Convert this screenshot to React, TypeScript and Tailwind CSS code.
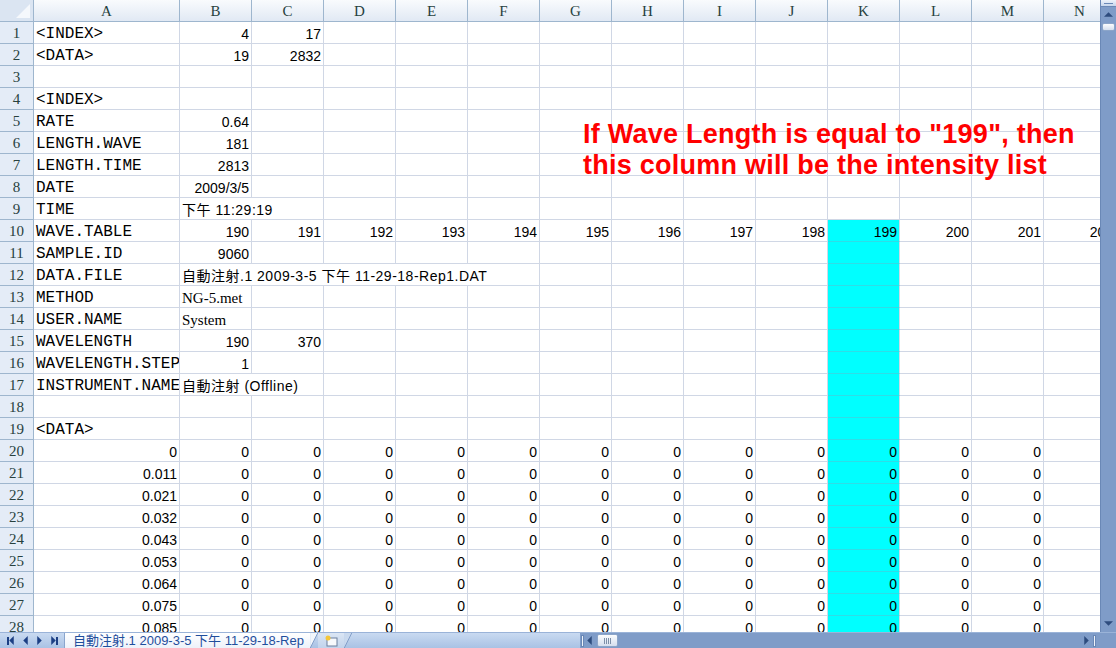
import React from "react";

type Cell = { t?: string; r?: boolean; span?: number; f?: "m" | "n" | "s" | "c" };

const lab = (t: string): Cell => ({ t, f: "m" });
const num = (t: string | number): Cell => ({ t: String(t), r: true, f: "n" });

const letters = ["A", "B", "C", "D", "E", "F", "G", "H", "I", "J", "K", "L", "M", "N"];
const times = ["0", "0.011", "0.021", "0.032", "0.043", "0.053", "0.064", "0.075", "0.085"];

const rows: Cell[][] = [
  [lab("<INDEX>"), num(4), num(17)],
  [lab("<DATA>"), num(19), num(2832)],
  [],
  [lab("<INDEX>")],
  [lab("RATE"), num("0.64")],
  [lab("LENGTH.WAVE"), num(181)],
  [lab("LENGTH.TIME"), num(2813)],
  [lab("DATE"), num("2009/3/5")],
  [lab("TIME"), { t: "下午 11:29:19", span: 2, f: "c" }],
  [lab("WAVE.TABLE"), ...Array.from({ length: 13 }, (_, i) => num(190 + i))],
  [lab("SAMPLE.ID"), num(9060)],
  [lab("DATA.FILE"), { t: "自動注射.1 2009-3-5 下午 11-29-18-Rep1.DAT", span: 5, f: "c" }],
  [lab("METHOD"), { t: "NG-5.met", f: "s" }],
  [lab("USER.NAME"), { t: "System", f: "s" }],
  [lab("WAVELENGTH"), num(190), num(370)],
  [lab("WAVELENGTH.STEP"), num(1)],
  [lab("INSTRUMENT.NAME"), { t: "自動注射 (Offline)", span: 2, f: "c" }],
  [],
  [lab("<DATA>")],
  ...times.map((t) => [num(t), ...Array.from({ length: 13 }, () => num(0))]),
];

const spanClass: Record<number, string> = { 1: "", 2: "col-span-2", 5: "col-span-5" };
const fontClass = {
  m: "font-['Liberation_Mono',monospace] text-[16px] leading-[16px]",
  n: "font-['Liberation_Sans',sans-serif] text-[14px] leading-[16px]",
  c: "font-['Liberation_Sans','Noto_Sans_CJK_TC',sans-serif] text-[14px] leading-[16px] tracking-[0.5px]",
  s: "font-['Liberation_Serif',serif] text-[15px] leading-[16px]",
};

function fill(row: Cell[]) {
  const out: { cell: Cell; col: number }[] = [];
  let col = 0;
  for (const c of row) {
    out.push({ cell: c, col });
    col += c.span ?? 1;
  }
  while (col < 14) {
    out.push({ cell: {}, col });
    col++;
  }
  return out;
}

function Tri({ dir, className }: { dir: "up" | "down" | "left" | "right"; className?: string }) {
  const pts = {
    up: "0,5 5,0 10,5",
    down: "0,0 10,0 5,5",
    left: "5,0 5,10 0,5",
    right: "0,0 5,5 0,10",
  }[dir];
  const vb = dir === "up" || dir === "down" ? "0 0 10 5" : "0 0 5 10";
  const size = dir === "up" || dir === "down" ? "w-[9px] h-[5px]" : "w-[5px] h-[9px]";
  return (
    <svg viewBox={vb} className={`${size} ${className ?? ""}`}>
      <polygon points={pts} fill="currentColor" />
    </svg>
  );
}

export default function App() {
  return (
    <div className="w-[1116px] h-[648px] overflow-hidden bg-white flex flex-col">
      <div className="flex h-[632px]">
        <div className="relative w-[1100px] h-[632px] overflow-hidden">
          <div className="grid grid-cols-[34px_146px_repeat(13,72px)] auto-rows-[22px] w-[1116px]">
            {/* column headers */}
            <div className="relative border-r border-b border-[#9eb6ce] bg-[#dbe5f2]">
              <svg viewBox="0 0 10 10" className="absolute right-[3px] bottom-[3px] w-[14px] h-[14px]">
                <polygon points="10,0 10,10 0,10" fill="#f5f8fc" />
              </svg>
            </div>
            {letters.map((l) => (
              <div
                key={l}
                className="flex items-center justify-center border-r border-b border-[#9eb6ce] bg-gradient-to-b from-[#f9fbfd] to-[#e1e9f4] font-['Liberation_Serif',serif] text-[15px] leading-[16px] text-[#27413e]"
              >
                {l}
              </div>
            ))}
            {rows.map((row, ri) => (
              <React.Fragment key={ri}>
                <div className="flex items-center justify-center border-r border-b border-[#9eb6ce] bg-[#e4ecf7] font-['Liberation_Serif',serif] text-[15px] leading-[16px] text-[#27413e]">
                  {ri + 1}
                </div>
                {fill(row).map(({ cell, col }) => {
                  const cyan = col === 10 && ri >= 9;
                  return (
                    <div
                      key={col}
                      className={`flex items-end pb-[1px] px-[2px] whitespace-nowrap overflow-hidden text-black border-r border-b ${
                        cyan ? "bg-[#00ffff] border-b-[#2fdde6] border-r-[#d0d7e5]" : "border-[#d0d7e5]"
                      } ${cell.r ? "justify-end" : "justify-start"} ${spanClass[cell.span ?? 1]} ${
                        cell.f ? fontClass[cell.f] : ""
                      }`}
                    >
                      {cell.t}
                    </div>
                  );
                })}
              </React.Fragment>
            ))}
          </div>
          <div className="absolute left-[583px] top-[119px] font-['Liberation_Sans',sans-serif] font-bold text-[27px] leading-[31px] tracking-[0.25px] text-[#ff0000] whitespace-nowrap">
            <div>If Wave Length is equal to "199", then</div>
            <div>this column will be the intensity list</div>
          </div>
        </div>
        {/* vertical scrollbar */}
        <div className="w-[16px] h-[632px] flex flex-col items-center bg-[#7f9cc8] border-l border-[#6a88b6]">
          <div className="w-full h-[7px] bg-gradient-to-b from-[#eef3fa] to-[#c7d6ec] border-b border-[#6a88b6] flex items-center justify-center">
            <div className="w-[9px] h-[1px] bg-[#6a88b6]" />
          </div>
          <Tri dir="up" className="mt-[5px] text-[#2e4c7e]" />
          <div className="mt-[6px] w-[13px] h-[8px] rounded-[2px] bg-gradient-to-b from-[#fbfcfe] to-[#d5dfee] border border-[#8ca5c9]" />
          <div className="flex-1" />
          <Tri dir="down" className="mb-[6px] text-[#2e4c7e]" />
        </div>
      </div>
      {/* bottom bar */}
      <div className="h-[16px] flex bg-gradient-to-b from-[#c9daf1] to-[#a9c2e4] border-t border-[#9ab3d8]">
        <div className="w-[64px] flex items-center justify-around px-[2px] text-[#1c3f84]">
          <div className="flex items-center">
            <div className="w-[2px] h-[8px] bg-current" />
            <Tri dir="left" className="w-[4px] h-[8px]" />
          </div>
          <Tri dir="left" className="w-[4px] h-[8px]" />
          <Tri dir="right" className="w-[4px] h-[8px]" />
          <div className="flex items-center">
            <Tri dir="right" className="w-[4px] h-[8px]" />
            <div className="w-[2px] h-[8px] bg-current" />
          </div>
        </div>
        <div className="flex items-stretch">
          <div className="bg-gradient-to-b from-[#ffffff] to-[#edf2fa] border-l border-[#8aa5cd] flex items-center pl-[8px] pr-[6px] font-['Liberation_Sans','Noto_Sans_CJK_TC',sans-serif] text-[13px] leading-none text-[#1f4e9c] whitespace-nowrap">
            自動注射.1 2009-3-5 下午 11-29-18-Rep
          </div>
          <svg viewBox="0 0 8 16" className="w-[8px] h-[15px]">
            <polygon points="0,0 0,16 8,0" fill="#f2f6fb" />
            <line x1="0" y1="16" x2="8" y2="0" stroke="#7f9bc6" strokeWidth="1" />
          </svg>
          <div className="w-[26px] flex items-center justify-center bg-gradient-to-b from-[#dbe6f4] to-[#c1d3ec]">
            <svg viewBox="0 0 14 12" className="w-[14px] h-[12px]">
              <rect x="3" y="3" width="10" height="8" fill="#f7f9fc" stroke="#6a7f9e" />
              <circle cx="4" cy="3" r="2.5" fill="#f4c63a" />
            </svg>
          </div>
          <svg viewBox="0 0 8 16" className="w-[8px] h-[15px]">
            <polygon points="0,0 0,16 8,0" fill="#c9d9ee" />
            <line x1="0" y1="16" x2="8" y2="0" stroke="#7f9bc6" strokeWidth="1" />
          </svg>
        </div>
        <div className="flex-1" />
        <div className="w-[517px] flex items-center bg-[#7f9cc8]">
          <div className="ml-[1px] w-[3px] h-[12px] bg-[#eef3fa] border border-[#6a88b6]" />
          <Tri dir="left" className="ml-[3px] w-[4px] h-[8px] text-[#2e4c7e]" />
          <div className="ml-[5px] w-[21px] h-[13px] rounded-[2px] bg-gradient-to-b from-[#fbfcfe] to-[#d5dfee] border border-[#8ca5c9] flex items-center justify-center gap-[1px]">
            <div className="w-[1px] h-[6px] bg-[#7d8fa8]" />
            <div className="w-[1px] h-[6px] bg-[#7d8fa8]" />
            <div className="w-[1px] h-[6px] bg-[#7d8fa8]" />
            <div className="w-[1px] h-[6px] bg-[#7d8fa8]" />
          </div>
          <div className="flex-1" />
          <Tri dir="right" className="w-[4px] h-[8px] text-[#2e4c7e]" />
          <div className="ml-[4px] mr-[1px] w-[3px] h-[12px] bg-[#eef3fa] border border-[#6a88b6]" />
        </div>
        <div className="w-[19px] bg-[#7f9cc8]" />
      </div>
    </div>
  );
}
